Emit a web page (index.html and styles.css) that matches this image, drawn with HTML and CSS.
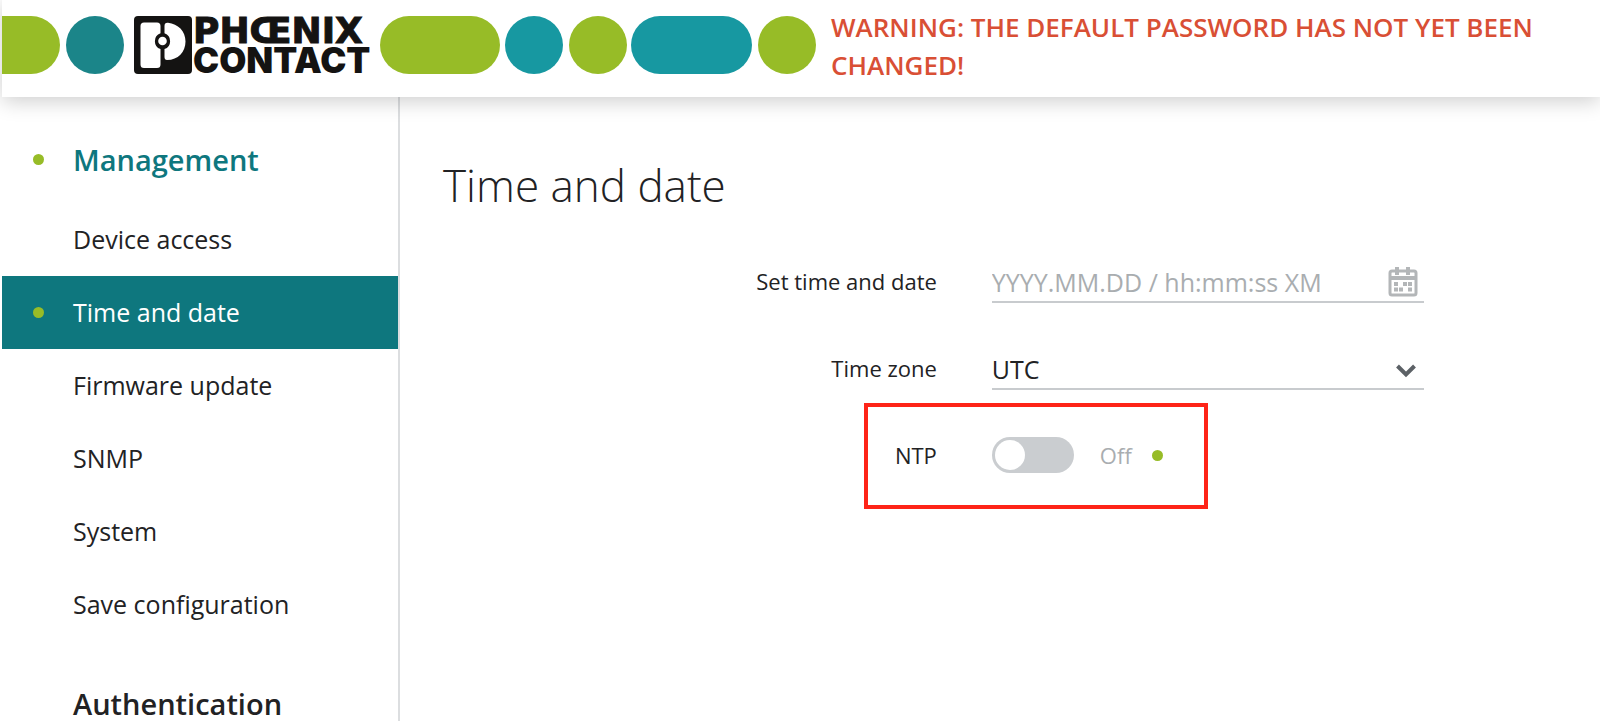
FILE: index.html
```html
<!DOCTYPE html>
<html lang="en">
<head>
    <meta charset="UTF-8">
    <meta name="viewport" content="width=device-width, initial-scale=1.0">
    <title>Time and date</title>
    <link rel="stylesheet" href="styles.css">
</head>
<body>
    <header class="header">
        <svg class="banner" width="815" height="58" viewBox="0 0 815 58" role="img" aria-label="Phoenix Contact">
            <path fill="#97bc27" d="M0 0h29a29 29 0 0 1 0 58H0z"/>
            <circle fill="#1b8589" cx="93" cy="29" r="29"/>
            <!-- logo -->
            <rect fill="#141312" x="132" y="0" width="58" height="58" rx="4"/>
            <path fill="#fff" d="M142 6.500H155Q158.500 6.500 158.500 10V17.300A8.300 8.300 0 0 0 158.500 33V48.500Q158.500 52 155 52H142Q138.500 52 138.500 48.500V10Q138.500 6.500 142 6.500Z"/>
            <path fill="#fff" d="M162.500 10Q162.500 6.500 166 6.800C176 8 183.500 15 183.500 25.500C183.500 36 176 44 165 44Q162.500 44 162.500 41V33A8.300 8.300 0 0 0 162.500 17.300Z"/>
            <circle fill="#fff" cx="160.500" cy="25" r="4.300"/>
            <g class="logo-text">
                <text class="top" x="191" y="27">PHŒNIX</text>
                <text class="bottom" x="191" y="57">CONTACT</text>
            </g>
            <rect fill="#97bc27" x="378" width="120" height="58" rx="29"/>
            <circle fill="#1798a1" cx="532" cy="29" r="29"/>
            <circle fill="#97bc27" cx="596" cy="29" r="29"/>
            <rect fill="#1798a1" x="629" width="121" height="58" rx="29"/>
            <circle fill="#97bc27" cx="785" cy="29" r="29"/>
        </svg>
        <p class="warning">WARNING: THE DEFAULT PASSWORD HAS NOT YET BEEN CHANGED!</p>
    </header>
    <div class="wrap">
        <nav class="sidebar">
            <h2 class="on">Management</h2>
            <ul>
                <li><a href="#">Device access</a></li>
                <li class="on"><a href="#">Time and date</a></li>
                <li><a href="#">Firmware update</a></li>
                <li><a href="#">SNMP</a></li>
                <li><a href="#">System</a></li>
                <li><a href="#">Save configuration</a></li>
            </ul>
            <h2>Authentication</h2>
        </nav>
        <main class="content">
            <h1>Time and date</h1>
            <form>
                <div class="row">
                    <label for="datetime">Set time and date</label>
                    <div class="field">
                        <input type="text" id="datetime" placeholder="YYYY.MM.DD / hh:mm:ss XM">
                        <button type="button" class="calendar" aria-label="Open calendar">
                            <svg width="30" height="30" viewBox="0 0 30 30">
                                <path fill="none" stroke="#b3b6b8" stroke-width="3" d="M4 4h22q2 0 2 2v20q0 2-2 2H4q-2 0-2-2V6q0-2 2-2z"/>
                                <path fill="#b3b6b8" d="M2 9h26v4H2zM7 0h4v8H7zM18 0h4v8h-4zM6 15h4v4H6zM15 15h4v4h-4zM20 15h4v4h-4zM6 20.500h4v4H6zM11 20.500h4v4h-4zM20 20.500h4v4h-4z"/>
                            </svg>
                        </button>
                    </div>
                </div>
                <div class="row">
                    <label for="zone">Time zone</label>
                    <div class="field">
                        <select id="zone">
                            <option>UTC</option>
                        </select>
                        <svg class="arrow" width="20" height="14" viewBox="0 0 20 14">
                            <path fill="none" stroke="#5c6166" stroke-width="4" d="M1.500 2l8.500 8.500L18.500 2"/>
                        </svg>
                    </div>
                </div>
                <div class="row">
                    <label for="ntp">NTP</label>
                    <div class="switch">
                        <input type="checkbox" id="ntp" role="switch">
                        <span class="state">Off</span>
                        <span class="dot"></span>
                        <div class="mark"></div>
                    </div>
                </div>
            </form>
        </main>
    </div>
</body>
</html>
```

FILE: styles.css
```css
* { margin: 0; padding: 0; box-sizing: border-box; }
li { list-style: none; }
a { color: inherit; text-decoration: none; }
body, html {
    height: 100%;
}
body {
    display: flex;
    flex-direction: column;
    padding-left: 2px;
    overflow: hidden;
    background: #fff;
    color: #222224;
    font-family: "Open Sans", sans-serif;
    font-size: 25px;
}
/* header */
.header {
    display: flex;
    flex-shrink: 0;
    align-items: flex-start;
    min-height: 97px;
    position: relative;
    background: #fff;
    box-shadow: 0 4px 20px rgba(0, 0, 0, 0.2);
}
.banner {
    flex-shrink: 0;
    margin-top: 16px;
    overflow: visible;
}
.logo-text {
    fill: #141312;
    font-weight: 900;
}
.logo-text .top {
    font-family: "DejaVu Sans", sans-serif;
    font-size: 36px;
    stroke: #141312;
    stroke-width: 1px;
}
.logo-text .bottom {
    font-family: Inter, sans-serif;
    font-size: 35px;
}
.warning {
    margin: 8px 40px 0 14px;
    color: #d94f35;
    font-size: 26px;
    font-weight: 600;
    line-height: 38px;
}
/* sidebar */
.wrap {
    display: flex;
    flex: 1;
    min-height: 0;
}
.sidebar {
    width: 398px;
    flex-shrink: 0;
    overflow: hidden;
    padding-top: 27px;
    border-right: 2px solid #dcdee0;
}
.sidebar h2 {
    padding-left: 71px;
    font-size: 29px;
    font-weight: 600;
    line-height: 72px;
}
.sidebar h2.on {
    color: #0e777e;
}
.sidebar ul {
    padding: 7px 0 27px;
}
.sidebar li a {
    display: block;
    padding-left: 71px;
    line-height: 73px;
}
.sidebar li.on {
    background: #0e777e;
    color: #fff;
}
.sidebar .on {
    position: relative;
}
.sidebar .on::before {
    content: "";
    position: absolute;
    left: 31px;
    top: 50%;
    width: 11px;
    height: 11px;
    margin-top: -6px;
    border-radius: 50%;
    background: #97bc27;
}
/* content */
.content {
    flex: 1;
    padding: 56px 176px 0 43px;
}
.content h1 {
    margin-bottom: 32px;
    font-size: 44px;
    font-weight: 300;
    line-height: 64px;
}
.row {
    display: grid;
    grid-template-columns: 8fr 7fr;
    column-gap: 55px;
    align-items: center;
    height: 64px;
    margin-bottom: 23px;
}
.row label {
    text-align: right;
    font-size: 22px;
}
.field {
    display: flex;
    align-items: center;
    position: relative;
    height: 44px;
    padding-top: 4px;
    border-bottom: 2px solid #c8cbce;
}
.field input, .field select {
    flex: 1;
    min-width: 0;
    height: 36px;
    border: 0;
    outline: 0;
    background: none;
    color: inherit;
    font: inherit;
    appearance: none;
}
.field input::placeholder {
    color: #a9adb0;
}
.calendar {
    width: 30px;
    height: 30px;
    margin-right: 6px;
    border: 0;
    background: none;
}
.arrow {
    position: absolute;
    right: 8px;
    top: 18px;
    pointer-events: none;
}
.switch {
    display: flex;
    align-items: center;
    justify-self: start;
    position: relative;
}
.switch input {
    width: 82px;
    height: 36px;
    padding: 3px;
    border-radius: 18px;
    background: #cacdd0;
    appearance: none;
}
.switch input::before {
    content: "";
    display: block;
    width: 30px;
    height: 30px;
    border-radius: 50%;
    background: #fff;
}
.switch input:checked {
    padding-left: 49px;
    background: #97bc27;
}
.state {
    margin: 0 20px 0 26px;
    color: #a9adb0;
    font-size: 22px;
}
.dot {
    width: 11px;
    height: 11px;
    border-radius: 50%;
    background: #97bc27;
}
/* red frame round the NTP switch */
.mark {
    position: absolute;
    left: -128px;
    right: -45px;
    top: -34px;
    height: 106px;
    border: 4px solid #fe2418;
    pointer-events: none;
}
```
